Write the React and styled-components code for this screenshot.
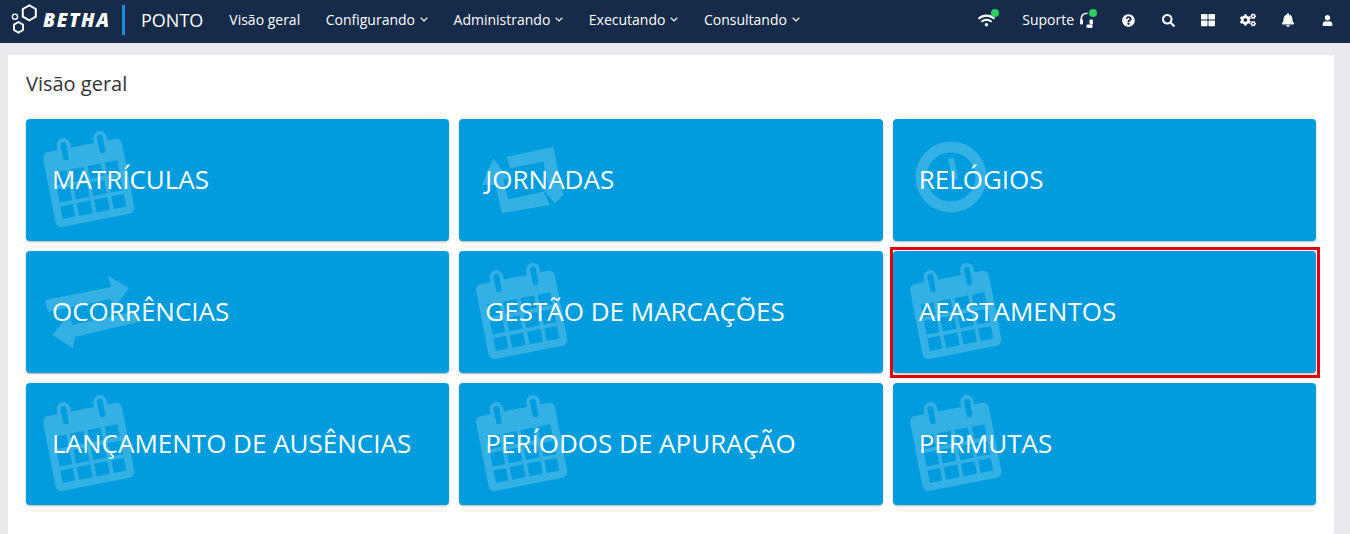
import styled, { createGlobalStyle } from "styled-components";
import {
  FaQuestionCircle,
  FaSearch,
  FaThLarge,
  FaCogs,
  FaBell,
  FaUser,
  FaWifi,
} from "react-icons/fa";

const GlobalStyle = createGlobalStyle`
  html, body {
    margin: 0;
    padding: 0;
    height: 100%;
    overflow: hidden;
    background: #e9ebef;
    font-family: "Open Sans", "Liberation Sans", sans-serif;
  }
`;

const Caret = () => (
  <CaretSvg viewBox="0 0 8 5" width="8" height="5">
    <path d="M.7.8 4 4 7.3.8" fill="none" stroke="currentColor" strokeWidth="1.2" />
  </CaretSvg>
);

const Logo = () => (
  <svg width="28" height="34" viewBox="0 0 28 34" fill="none" stroke="#fff">
    <path d="M20.3 2.300 26.800 6v7.600l-6.500 3.700-6.500-3.700V6z" strokeWidth="2" />
    <path d="M9.500 19 14 21.600V27l-4.500 2.600L5 27v-5.400z" strokeWidth="1.800" />
    <circle cx="6" cy="13.700" r="2.600" strokeWidth="1.400" />
  </svg>
);

const Headset = () => (
  <svg width="13" height="16" viewBox="0 0 13 16" fill="none">
    <path d="M1.300 9V6.500C1.300 3.300 3.500 1.200 7.500 1.200" stroke="#fff" strokeWidth="1.600" />
    <rect x="0" y="7.500" width="3" height="5" rx="1" fill="#fff" />
    <rect x="9.500" y="7.500" width="3.500" height="5" rx="1" fill="#fff" />
    <rect x="6.500" y="12.500" width="6" height="3.500" rx="1" fill="#fff" />
  </svg>
);

const CalendarIcon = () => (
  <Watermark $left={14} $top={11} width="96" height="100" viewBox="0 0 98 102">
    <g transform="rotate(-11 49 50)" fill="#fff">
      <path
        fillRule="evenodd"
        d="M14 15h14v12h6V15h32v12h6V15h12c4 0 6 3 6 6v66c0 3-3 6-6 6H14c-4 0-6-3-6-6V21c0-3 2-6 6-6zM16 37v13h13V37zm17 0v13h14V37zm18 0v13h14V37zm18 0v13h13V37zM16 54v14h13V54zm17 0v14h14V54zm18 0v14h14V54zm18 0v14h13V54zM16 72v13h13V72zm17 0v13h14V72zm18 0v13h14V72zm18 0v13h13V72z"
      />
      <rect x="26" y="6" width="10" height="23" rx="5" fill="none" stroke="#fff" strokeWidth="4" />
      <rect x="64" y="6" width="10" height="23" rx="5" fill="none" stroke="#fff" strokeWidth="4" />
    </g>
  </Watermark>
);

const RetweetIcon = () => (
  <Watermark $left={20} $top={25} width="90" height="72" viewBox="20 25 90 72">
    <path
      fill="#fff"
      d="M47.700 37.700 94.300 27.700 104.300 76 96 84.300 84.300 71 89.300 69.300 84.300 42.700 51 49.300zM34.300 39.300 49.300 59.300 44.300 60.300 49.300 80.300 84.300 72.700 91 86 42.700 94.300 36.700 66 22.700 66z"
    />
  </Watermark>
);

const ClockIcon = () => (
  <Watermark $left={22} $top={22} width="72" height="72" viewBox="0 0 72 72">
    <circle cx="36" cy="36" r="30" fill="none" stroke="#fff" strokeWidth="11" />
    <path d="M33 18l6-1 4 21-6 1z" fill="#fff" />
  </Watermark>
);

const ExchangeIcon = () => (
  <Watermark $left={15} $top={20} width="100" height="80" viewBox="15 20 100 80">
    <path
      fill="#fff"
      d="M19 49 85 36 82 25 103 37 87 59 85 48 22 61zM26 84 44 63 46 74 110 60 112 71 49 86 47 97z"
    />
  </Watermark>
);

const icons = {
  calendar: CalendarIcon,
  retweet: RetweetIcon,
  clock: ClockIcon,
  exchange: ExchangeIcon,
};

const navItems = ["Configurando", "Administrando", "Executando", "Consultando"];

const cards = [
  { title: "MATRÍCULAS", icon: "calendar" },
  { title: "JORNADAS", icon: "retweet" },
  { title: "RELÓGIOS", icon: "clock" },
  { title: "OCORRÊNCIAS", icon: "exchange" },
  { title: "GESTÃO DE MARCAÇÕES", icon: "calendar" },
  { title: "AFASTAMENTOS", icon: "calendar", marked: true },
  { title: "LANÇAMENTO DE AUSÊNCIAS", icon: "calendar" },
  { title: "PERÍODOS DE APURAÇÃO", icon: "calendar" },
  { title: "PERMUTAS", icon: "calendar" },
];

const App = () => {
  return (
    <>
      <GlobalStyle />
      <Header>
        <Brand>
          <Logo />
          <BrandName>BETHA</BrandName>
        </Brand>
        <Divider />
        <Product>PONTO</Product>
        <Nav>
          <NavItem>Visão geral</NavItem>
          {navItems.map((item) => (
            <NavItem key={item}>
              {item}
              <Caret />
            </NavItem>
          ))}
        </Nav>
        <Tools>
          <WifiButton>
            <FaWifi size={17} />
            <Dot />
          </WifiButton>
          <Support>
            Suporte
            <SupportIcon>
              <Headset />
              <Dot />
            </SupportIcon>
          </Support>
          <Tool><FaQuestionCircle size={13} /></Tool>
          <Tool><FaSearch size={13} /></Tool>
          <Tool><FaThLarge size={14} /></Tool>
          <Tool><FaCogs size={16} /></Tool>
          <Tool><FaBell size={14} /></Tool>
          <Tool><FaUser size={11} /></Tool>
        </Tools>
      </Header>
      <Panel>
        <Title>Visão geral</Title>
        <Grid>
          {cards.map((card) => {
            const Icon = icons[card.icon];
            return (
              <Card key={card.title}>
                <Icon />
                <CardTitle>{card.title}</CardTitle>
                {card.marked && <Highlight />}
              </Card>
            );
          })}
        </Grid>
      </Panel>
    </>
  );
};

const Header = styled.header`
  box-sizing: border-box;
  height: 43px;
  background: #152b49;
  color: #fff;
  display: flex;
  align-items: center;
  padding: 0 2.600px 3px 9px;
`;

const Brand = styled.div`
  display: flex;
  align-items: center;
  gap: 6px;
  width: 112px;
`;

const BrandName = styled.span`
  font-size: 19px;
  font-weight: 800;
  font-style: italic;
  letter-spacing: 1.600px;
`;

const Divider = styled.div`
  width: 3px;
  height: 30px;
  background: #1b8fd8;
  margin-left: 1px;
`;

const Product = styled.span`
  font-size: 18px;
  margin: -1px 0 0 16px;
`;

const Nav = styled.nav`
  display: flex;
  align-items: center;
  gap: 25.500px;
  margin: -2px 0 0 26px;
  font-size: 14px;
`;

const NavItem = styled.span`
  display: flex;
  align-items: center;
  gap: 5px;
  white-space: nowrap;
`;

const CaretSvg = styled.svg`
  margin-top: 1px;
`;

const Tools = styled.div`
  margin-left: auto;
  display: flex;
  align-items: center;
  font-size: 14px;
`;

const Tool = styled.span`
  width: 39.800px;
  height: 24px;
  display: flex;
  align-items: center;
  justify-content: center;
`;

const WifiButton = styled.span`
  position: relative;
  display: flex;
  margin-right: 27px;
`;

const Support = styled.span`
  display: flex;
  align-items: center;
  gap: 6px;
  margin-right: 15.600px;
  line-height: 18px;
`;

const SupportIcon = styled.span`
  position: relative;
  display: flex;
`;

const Dot = styled.i`
  position: absolute;
  top: -3px;
  right: -4px;
  width: 8px;
  height: 8px;
  border-radius: 50%;
  background: #2ecc5f;
`;

const Panel = styled.main`
  box-sizing: border-box;
  height: 479px;
  margin: 12px 16px 0 8px;
  padding: 15px 18px 30px;
  background: #fff;
`;

const Title = styled.h1`
  margin: 0 0 21px;
  font-size: 20px;
  line-height: 28px;
  font-weight: 400;
  color: #333;
`;

const Grid = styled.div`
  display: grid;
  grid-template-columns: repeat(3, 1fr);
  grid-auto-rows: 122px;
  gap: 10px;
`;

const Card = styled.div`
  position: relative;
  display: flex;
  align-items: center;
  padding: 0 0 2px 26px;
  background: #009cde;
  border-radius: 4px;
  box-shadow: 0 1px 2px rgba(0, 0, 0, 0.3);
`;

const Watermark = styled.svg`
  position: absolute;
  left: ${(props) => props.$left}px;
  top: ${(props) => props.$top}px;
  opacity: 0.2;
`;

const CardTitle = styled.span`
  position: relative;
  color: #fff;
  font-size: 26px;
  line-height: 36px;
`;

const Highlight = styled.div`
  position: absolute;
  inset: -4px -4px -5px -3px;
  border: 3px solid #e6000f;
`;

export default App;
